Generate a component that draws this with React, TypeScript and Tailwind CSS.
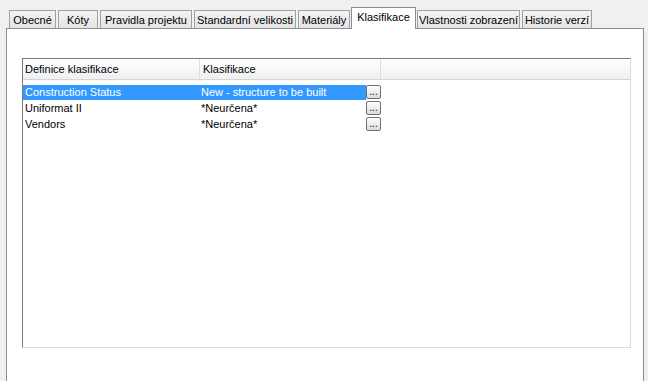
import React from 'react';

const tabs = [
  { label: 'Obecné', w: 'w-[47px]' },
  { label: 'Kóty', w: 'w-[40px]' },
  { label: 'Pravidla projektu', w: 'w-[92px]' },
  { label: 'Standardní velikosti', w: 'w-[102px]' },
  { label: 'Materiály', w: 'w-[52px]' },
  { label: 'Klasifikace', w: 'w-[65px]', active: true },
  { label: 'Vlastnosti zobrazení', w: 'w-[103px]' },
  { label: 'Historie verzí', w: 'w-[70px]' },
];

const rows = [
  { name: 'Construction Status', value: 'New - structure to be built', selected: true },
  { name: 'Uniformat II', value: '*Neurčena*' },
  { name: 'Vendors', value: '*Neurčena*' },
];

export default function App() {
  return (
    <div
      className="w-[648px] h-[381px] bg-[#f0f0f0] overflow-hidden flex flex-col pt-[7px] text-[11px] text-black"
      style={{ fontFamily: 'Tahoma, "Liberation Sans", Arial, sans-serif' }}
    >
      {/* Tab strip */}
      <div className="relative z-10 flex items-end h-[21px] pl-[9px] gap-[2px]">
        {tabs.map((t) =>
          t.active ? (
            <div
              key={t.label}
              className={`${t.w} h-[22px] -mb-[1px] -mx-[1px] bg-white border border-b-0 border-[#898c95] flex items-start justify-center pt-[2px] leading-[14px]`}
            >
              {t.label}
            </div>
          ) : (
            <div
              key={t.label}
              className={`${t.w} h-[18px] bg-gradient-to-b from-[#f4f4f4] to-[#e4e4e4] border border-b-0 border-[#a0a0a0] flex items-center justify-center leading-[14px] whitespace-nowrap`}
            >
              {t.label}
            </div>
          )
        )}
      </div>

      {/* Panel */}
      <div className="flex-1 ml-[6px] mr-[4px] bg-white border border-b-0 border-[#898c95] pt-[29px] pl-[15px] pr-[12px]">
        <div className="h-[290px] bg-white border-l border-t border-l-[#7a7a7a] border-t-[#7a7a7a] border-r border-b border-r-[#dadada] border-b-[#dadada] flex flex-col">
          {/* Header */}
          <div className="flex h-[21px] bg-gradient-to-b from-white to-[#eef0f2] border-b border-[#d5d5d5]">
            <div className="w-[177px] pl-[2px] flex items-center border-r border-[#dcdcdc]">Definice klasifikace</div>
            <div className="w-[181px] pl-[3px] flex items-center border-r border-[#dcdcdc]">Klasifikace</div>
            <div className="flex-1" />
          </div>

          {/* Rows */}
          <div className="pt-[4px] flex flex-col">
            {rows.map((r) => (
              <div key={r.name} className="flex h-[16px] items-center">
                <div
                  className={`flex h-[15px] w-[343px] items-center ${r.selected ? 'bg-[#3399ff] text-white' : ''}`}
                >
                  <div className="w-[178px] pl-[2px] whitespace-nowrap">{r.name}</div>
                  <div className="flex-1 whitespace-nowrap">{r.value}</div>
                </div>
                <button className="w-[15px] h-[14px] rounded-[2px] border border-[#707070] bg-gradient-to-b from-white to-[#dcdcdc] text-[10px] leading-[8px] text-black flex items-end justify-center pb-[2px]">
                  ...
                </button>
              </div>
            ))}
          </div>
        </div>
      </div>
    </div>
  );
}
